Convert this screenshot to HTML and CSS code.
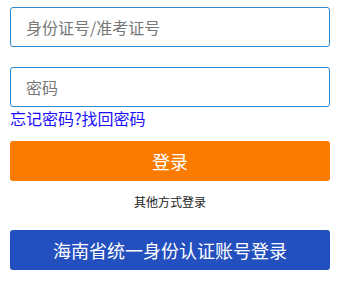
FILE: index.html
```html
<!DOCTYPE html>
<html>
<head>
  <meta charset="utf-8">
  <title>登录</title>
  <link rel="stylesheet" href="styles.css">
</head>
<body>
  <div class="login">
    <input type="text" class="field" placeholder="身份证号/准考证号">
    <input type="password" class="field field-pwd" placeholder="密码">
    <div class="forgot"><a href="#">忘记密码?找回密码</a></div>
    <button class="btn btn-login">登录</button>
    <div class="other">其他方式登录</div>
    <button class="btn btn-hn">海南省统一身份认证账号登录</button>
  </div>
</body>
</html>
```

FILE: styles.css
```css
body {
  margin: 0;
  font-family: "Noto Sans CJK SC", "Liberation Sans", sans-serif;
  background: #fff;
}
.login {
  width: 320px;
  padding: 7px 10px;
  display: flex;
  flex-direction: column;
}
.field {
  box-sizing: border-box;
  width: 320px;
  height: 40px;
  border: 1px solid #2b8ad0;
  border-radius: 3px;
  padding: 0 15px;
  font-family: inherit;
  font-size: 16px;
  outline: none;
}
.field::placeholder {
  color: #777;
}
.field-pwd {
  margin-top: 20px;
}
.forgot {
  height: 22px;
  line-height: 22px;
  font-size: 16px;
}
.forgot a {
  color: #1a0dff;
  text-decoration: none;
}
.btn {
  box-sizing: border-box;
  width: 320px;
  height: 40px;
  border: none;
  border-radius: 3px;
  color: #fff;
  font-family: inherit;
  font-size: 18px;
  padding: 0;
}
.btn-login {
  margin-top: 12px;
  background: #fb7b00;
}
.other {
  margin: 12px 0 20px;
  text-align: center;
  font-size: 12px;
  line-height: 17px;
  color: #222;
}
.btn-hn {
  background: #234fbf;
}
```
